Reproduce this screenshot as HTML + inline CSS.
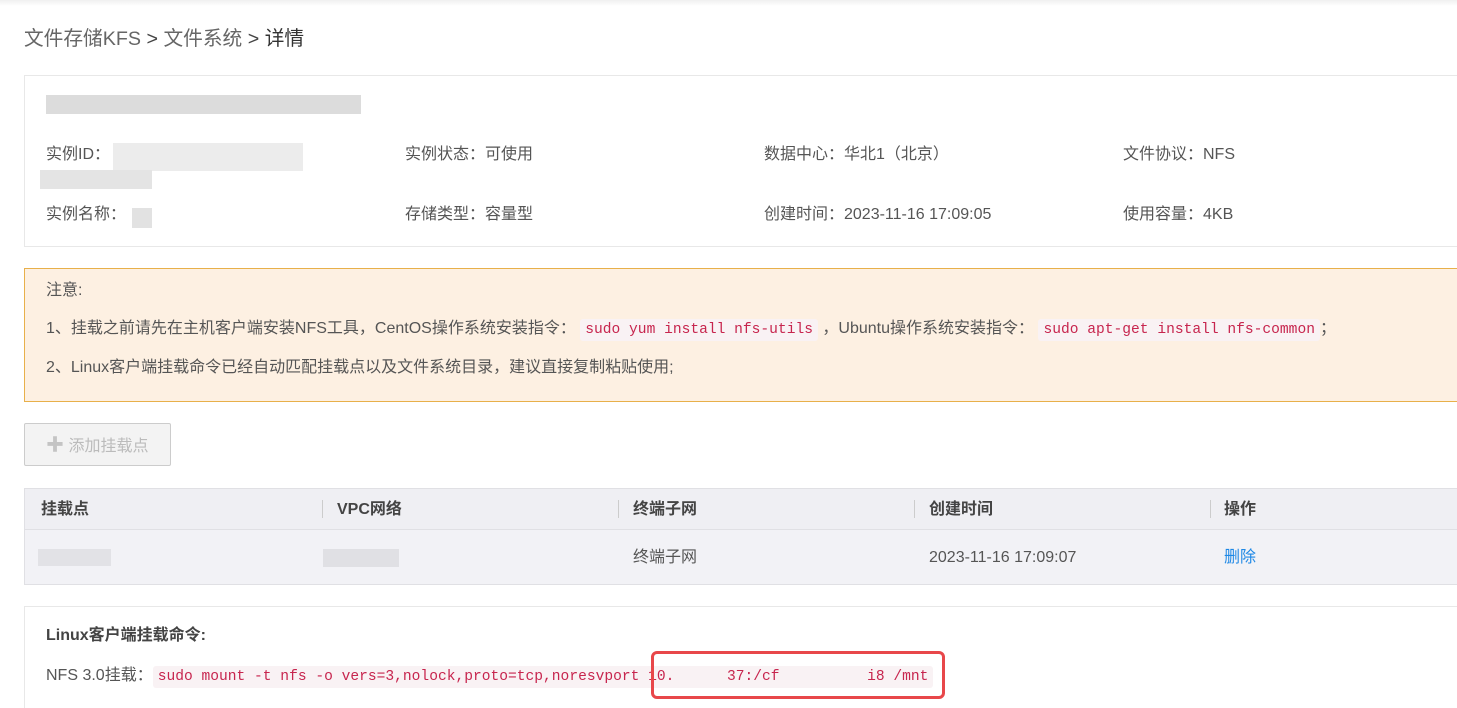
<!DOCTYPE html>
<html><head><meta charset="utf-8"><style>
*{margin:0;padding:0;box-sizing:border-box}
html,body{width:1457px;height:708px;overflow:hidden}
body{background:#fff;font-family:"Liberation Sans","Noto Sans CJK SC",sans-serif;color:#555;font-size:16px;position:relative}
.a{position:absolute;white-space:nowrap;line-height:20px}
.topbar{position:absolute;left:0;top:0;width:1457px;height:6px;background:linear-gradient(#f0f0f0,#fff)}
.card{position:absolute;left:24px;width:1450px;border:1px solid #e8e8e8;background:#fff}
.blur{position:absolute;background:#e6e6e6}
code{font-family:"Liberation Mono",monospace;font-size:14.6px;color:#c7254e;background:#f9f2f4;padding:3px 5px;border-radius:3px}
.th{position:absolute;top:500px;font-weight:bold;color:#444;line-height:20px}
.sep{position:absolute;top:500px;width:1px;height:18px;background:#ccc}
.td{position:absolute;top:548px;line-height:20px}
</style></head><body>
<div class="topbar"></div>
<div class="a" style="left:24px;top:27px;font-size:19.7px;line-height:24px;color:#666">文件存储KFS <b style="font-weight:normal;color:#444">&gt;</b> 文件系统 <b style="font-weight:normal;color:#444">&gt;</b> <span style="color:#333">详情</span></div>

<div class="card" style="top:75px;height:172px"></div>
<div class="blur" style="left:46px;top:95px;width:315px;height:19px;background:#dcdcdc"></div>
<div class="a" style="left:46px;top:145px">实例ID：</div>
<div class="blur" style="left:113px;top:143px;width:190px;height:28px;background:#ececec"></div>
<div class="blur" style="left:40px;top:170px;width:112px;height:19px;background:#e4e4e4"></div>
<div class="a" style="left:405px;top:145px">实例状态：可使用</div>
<div class="a" style="left:764px;top:145px">数据中心：华北1（北京）</div>
<div class="a" style="left:1123px;top:145px">文件协议：NFS</div>
<div class="a" style="left:46px;top:205px">实例名称：</div>
<div class="blur" style="left:132px;top:208px;width:20px;height:20px;background:#e2e2e2"></div>
<div class="a" style="left:405px;top:205px">存储类型：容量型</div>
<div class="a" style="left:764px;top:205px">创建时间：2023-11-16 17:09:05</div>
<div class="a" style="left:1123px;top:205px">使用容量：4KB</div>

<div style="position:absolute;left:24px;top:268px;width:1450px;height:134px;background:#fdf0e2;border:1px solid #e8b04a"></div>
<div class="a" style="left:46px;top:281px;color:#555">注意:</div>
<div class="a" style="left:46px;top:319px">1、挂载之前请先在主机客户端安装NFS工具，CentOS操作系统安装指令： <code>sudo yum install nfs-utils</code> ，Ubuntu操作系统安装指令： <code>sudo apt-get install nfs-common</code>；</div>
<div class="a" style="left:46px;top:358px">2、Linux客户端挂载命令已经自动匹配挂载点以及文件系统目录，建议直接复制粘贴使用;</div>

<div style="position:absolute;left:24px;top:423px;width:147px;height:43px;background:#f3f3f3;border:1px solid #ccc;border-radius:2px"></div>
<div class="a" style="left:46px;top:435px;color:#bbb"><span style="font-weight:bold;font-size:18px;color:#c4c4c4">✚</span> 添加挂载点</div>

<div style="position:absolute;left:24px;top:488px;width:1450px;height:97px;background:#f2f2f6;border:1px solid #e0e0e4"></div>
<div style="position:absolute;left:24px;top:529px;width:1450px;height:1px;background:#e0e0e4"></div>
<div style="position:absolute;left:25px;top:489px;width:1450px;height:40px;background:#efeff3"></div>
<div class="th" style="left:41px">挂载点</div>
<div class="sep" style="left:322px"></div><div class="th" style="left:337px">VPC网络</div>
<div class="sep" style="left:618px"></div><div class="th" style="left:633px">终端子网</div>
<div class="sep" style="left:914px"></div><div class="th" style="left:929px">创建时间</div>
<div class="sep" style="left:1210px"></div><div class="th" style="left:1224px">操作</div>
<div class="blur" style="left:38px;top:549px;width:73px;height:17px;background:#e2e2e6"></div>
<div class="blur" style="left:323px;top:549px;width:76px;height:18px;background:#e0e0e4"></div>
<div class="td" style="left:633px">终端子网</div>
<div class="td" style="left:929px">2023-11-16 17:09:07</div>
<div class="td" style="left:1224px;color:#1e88e5">删除</div>

<div class="card" style="top:606px;height:110px"></div>
<div class="a" style="left:46px;top:626px;font-weight:bold;color:#444">Linux客户端挂载命令:</div>
<div class="a" style="left:46px;top:666px">NFS 3.0挂载：<code>sudo mount -t nfs -o vers=3,nolock,proto=tcp,noresvport 10.&nbsp;&nbsp;&nbsp;&nbsp;&nbsp;&nbsp;37:/cf&nbsp;&nbsp;&nbsp;&nbsp;&nbsp;&nbsp;&nbsp;&nbsp;&nbsp;&nbsp;i8 /mnt</code></div>
<div style="position:absolute;left:651px;top:651px;width:294px;height:48px;border:3px solid #e8474a;border-radius:6px"></div>
</body></html>
